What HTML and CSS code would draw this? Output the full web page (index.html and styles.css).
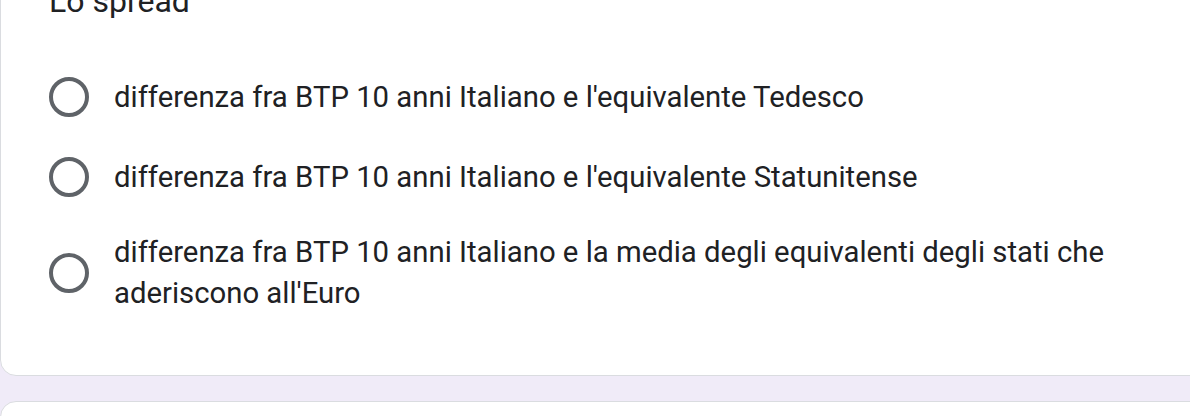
FILE: index.html
```html
<!DOCTYPE html>
<html lang="it">
<head>
<meta charset="utf-8">
<title>Lo spread</title>
<link rel="stylesheet" href="styles.css">
</head>
<body>
<div class="page">
  <div class="card question">
    <div class="title">Lo spread</div>
    <div class="options">
      <div class="option">
        <span class="radio"></span>
        <span class="label">differenza fra BTP 10 anni Italiano e l'equivalente Tedesco</span>
      </div>
      <div class="option">
        <span class="radio"></span>
        <span class="label">differenza fra BTP 10 anni Italiano e l'equivalente Statunitense</span>
      </div>
      <div class="option">
        <span class="radio"></span>
        <span class="label">differenza fra BTP 10 anni Italiano e la media degli equivalenti degli stati che aderiscono all'Euro</span>
      </div>
    </div>
  </div>
  <div class="card next"></div>
</div>
</body>
</html>
```

FILE: styles.css
```css
html, body {
  margin: 0;
  padding: 0;
}
body {
  background: #f0ebf8;
  overflow: hidden;
  height: 416px;
  font-family: Roboto, "Liberation Sans", Arial, sans-serif;
  color: #202124;
}
.page {
  width: 1240px;
  display: flex;
  flex-direction: column;
  gap: 25px;
}
.card {
  background: #fff;
  border: 1px solid #dadce0;
  border-radius: 16px;
}
.question {
  margin-top: -58px;
  padding: 38px 48px 62px 48px;
}
.title {
  font-size: 32px;
  line-height: 40px;
}
.options {
  margin-top: 51px;
  display: flex;
  flex-direction: column;
  gap: 30px;
}
.option {
  display: flex;
  align-items: center;
  min-height: 50px;
}
.radio {
  flex: 0 0 auto;
  box-sizing: border-box;
  width: 40px;
  height: 40px;
  border: 4px solid #5f6368;
  border-radius: 50%;
  margin-right: 25px;
}
.label {
  font-size: 29.3px;
  line-height: 40.5px;
  max-width: 1010px;
}
.next {
  height: 100px;
}
```
